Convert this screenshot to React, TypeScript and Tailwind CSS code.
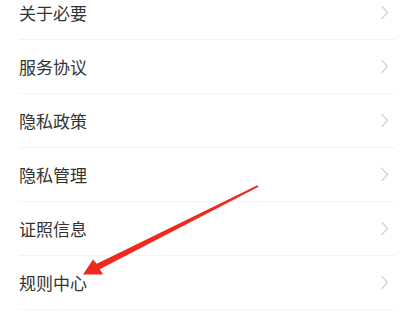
const items = ["关于必要", "服务协议", "隐私政策", "隐私管理", "证照信息", "规则中心"];

function Chevron() {
  return (
    <svg width="9" height="15" viewBox="0 0 9 15" className="shrink-0">
      <polyline
        points="1.5,1 7.5,7.5 1.5,14"
        fill="none"
        stroke="#c4c4c4"
        strokeWidth="1.1"
      />
    </svg>
  );
}

export default function App() {
  return (
    <div className="relative h-[326px] w-[404px] overflow-hidden bg-white font-['Noto_Sans_CJK_SC',sans-serif]">
      <ul className="-mt-[14px]">
        {items.map((label) => (
          <li key={label} className="pl-[19px] pr-[9px]">
            <div className="flex h-[54px] items-center justify-between border-b border-[#f3f3f3] pr-[6px]">
              <span className="text-[17px] leading-none text-[#333333]">{label}</span>
              <Chevron />
            </div>
          </li>
        ))}
      </ul>
      <svg
        className="pointer-events-none absolute left-0 top-0"
        width="404"
        height="326"
        viewBox="0 0 404 326"
      >
        <polygon
          points="258.6,186.8 99.8,269.3 103,274.5 83,274.5 93,259.5 96.8,263.7 257.4,185.2"
          fill="#ee2a1e"
        />
      </svg>
    </div>
  );
}
